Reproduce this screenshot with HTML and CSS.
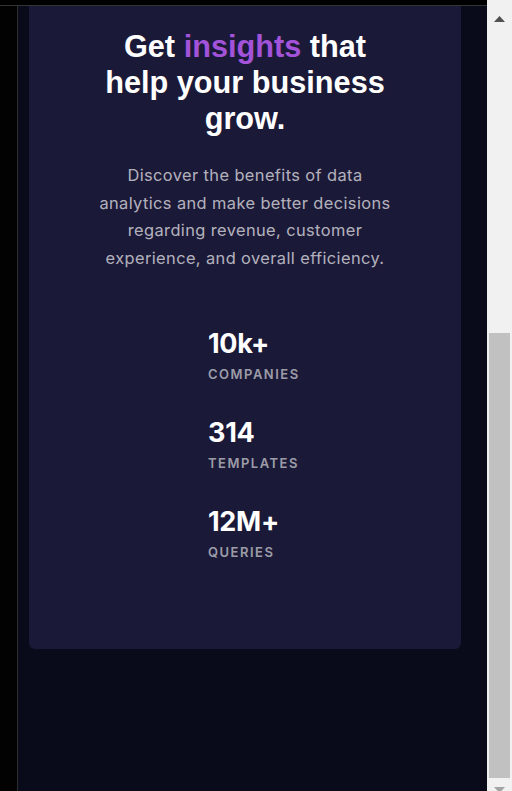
FILE: index.html
```html
<!DOCTYPE html>
<html lang="en">
<head>
<meta charset="utf-8">
<title>Stats preview card</title>
<link rel="stylesheet" href="styles.css">
</head>
<body>
<div class="viewport">
  <div class="frame-top"></div>
  <div class="frame-left"></div>
  <main class="page">
    <article class="card">
      <div class="card-image"></div>
      <div class="card-body">
        <h1 class="title">Get <span class="accent">insights</span> that help your business grow.</h1>
        <p class="lead">Discover the benefits of data analytics and make better decisions regarding revenue, customer experience, and overall efficiency.</p>
        <ul class="stats">
          <li class="stat"><span class="stat-value">10k+</span><span class="stat-label">Companies</span></li>
          <li class="stat"><span class="stat-value">314</span><span class="stat-label">Templates</span></li>
          <li class="stat"><span class="stat-value">12M+</span><span class="stat-label">Queries</span></li>
        </ul>
      </div>
    </article>
  </main>
</div>
<div class="scrollbar" aria-hidden="true">
  <div class="sb-up"><svg class="sb-arrow" width="11" height="6" viewBox="0 0 11 6"><polygon points="5.5,0 11,6 0,6" fill="#505050"/></svg></div>
  <div class="sb-thumb"></div>
  <div class="sb-down"><svg class="sb-arrow" width="11" height="6" viewBox="0 0 11 6"><polygon points="0,0 11,0 5.5,6" fill="#a3a3a3"/></svg></div>
</div>
</body>
</html>
```

FILE: styles.css
```css
html {
  height: 100%;
  overflow: hidden;
  background: #090b1a;
}

body {
  margin: 0;
  height: 100%;
  display: flex;
  background: #090b1a;
  font-family: "Inter", "Liberation Sans", sans-serif;
}

.viewport {
  flex: 1;
  min-width: 0;
  height: 100%;
  overflow-y: auto;
  scrollbar-width: none;
  display: flex;
  flex-direction: column-reverse;
}

.viewport::-webkit-scrollbar {
  display: none;
}

.frame-top {
  position: fixed;
  top: 0;
  left: 0;
  width: 487px;
  height: 5px;
  background: #000;
  border-bottom: 1px solid #333;
  z-index: 2;
}

.frame-left {
  position: fixed;
  top: 0;
  left: 0;
  width: 17px;
  height: 100%;
  background: #020202;
  border-right: 1px solid #2e2e2e;
  z-index: 1;
}

.page {
  flex: none;
  padding: 88px 0 142px 29px;
}

.card {
  width: 432px;
  background: #1b1938;
  border-radius: 6px;
  overflow: hidden;
}

.card-image {
  height: 400px;
  background: linear-gradient(135deg, #8f45c9, #5a2a8a);
}

.card-body {
  padding: 103px 0 85px;
  text-align: center;
}

.title {
  margin: 0 auto;
  max-width: 300px;
  font-family: "Liberation Sans", Arial, sans-serif;
  font-weight: 700;
  font-size: 30.7px;
  line-height: 36px;
  color: #fff;
}

.accent {
  color: #a353d9;
}

.lead {
  margin: 25px auto 0;
  max-width: 300px;
  font-size: 16.4px;
  line-height: 27.4px;
  letter-spacing: 0.4px;
  color: rgba(255, 255, 255, 0.68);
}

.stats {
  list-style: none;
  margin: 54px 0 0;
  padding: 0 0 0 179px;
  display: flex;
  flex-direction: column;
  gap: 29px;
  text-align: left;
}

.stat {
  display: flex;
  flex-direction: column;
}

.stat-value {
  font-weight: 700;
  font-size: 27px;
  line-height: 36px;
  letter-spacing: -0.3px;
  color: #fff;
}

.stat-label {
  font-weight: 600;
  font-size: 13px;
  line-height: 24px;
  letter-spacing: 1.5px;
  text-transform: uppercase;
  color: rgba(255, 255, 255, 0.58);
}

.scrollbar {
  flex: none;
  width: 25px;
  height: 100%;
  background: #f1f1f1;
  display: flex;
  flex-direction: column;
  overflow: hidden;
}

.sb-up {
  flex: none;
  height: 333px;
  padding: 16px 0 0 7px;
  box-sizing: border-box;
}

.sb-thumb {
  flex: none;
  height: 445px;
  margin: 0 2px;
  background: #c1c1c1;
}

.sb-down {
  flex: none;
  height: 13px;
  padding: 9px 0 0 7px;
  box-sizing: border-box;
  overflow: hidden;
}

.sb-arrow {
  display: block;
}
```
